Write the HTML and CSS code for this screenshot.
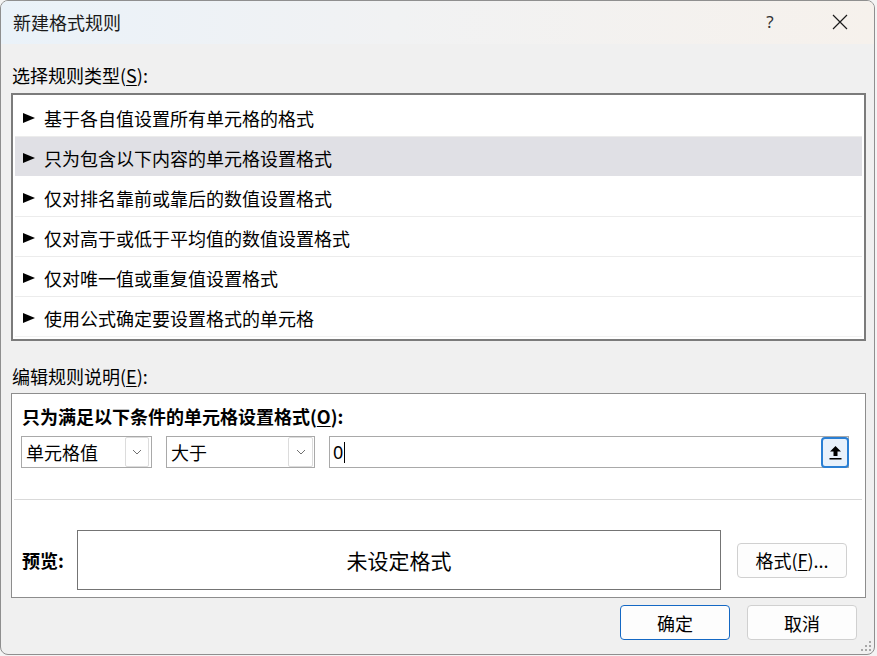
FILE: index.html
```html
<!DOCTYPE html>
<html lang="zh-CN">
<head>
<meta charset="utf-8">
<title>新建格式规则</title>
<link rel="stylesheet" href="styles.css">
</head>
<body>
<div class="window">
  <div class="titlebar">
    <span class="title">新建格式规则</span>
    <span class="help">?</span>
    <span class="close">
      <svg width="16" height="16" viewBox="0 0 16 16"><path d="M1 1 L15 15 M15 1 L1 15" stroke="#1a1a1a" stroke-width="1.2" fill="none"/></svg>
    </span>
  </div>
  <div class="content">
    <div class="label label-type">选择规则类型(<u>S</u>):</div>
    <div class="listbox">
      <div class="item"><i class="tri"></i>基于各自值设置所有单元格的格式</div>
      <div class="item selected"><i class="tri"></i>只为包含以下内容的单元格设置格式</div>
      <div class="item"><i class="tri"></i>仅对排名靠前或靠后的数值设置格式</div>
      <div class="item"><i class="tri"></i>仅对高于或低于平均值的数值设置格式</div>
      <div class="item"><i class="tri"></i>仅对唯一值或重复值设置格式</div>
      <div class="item"><i class="tri"></i>使用公式确定要设置格式的单元格</div>
    </div>
    <div class="label label-edit">编辑规则说明(<u>E</u>):</div>
    <div class="panel">
      <div class="heading">只为满足以下条件的单元格设置格式(<u>O</u>):</div>
      <div class="cond-row">
        <div class="combo combo-a">
          <span class="combo-text">单元格值</span>
          <span class="chev"><svg width="10" height="6" viewBox="0 0 10 6"><path d="M1 1 L5 5 L9 1" stroke="#707070" stroke-width="1" fill="none"/></svg></span>
        </div>
        <div class="combo combo-b">
          <span class="combo-text">大于</span>
          <span class="chev"><svg width="10" height="6" viewBox="0 0 10 6"><path d="M1 1 L5 5 L9 1" stroke="#707070" stroke-width="1" fill="none"/></svg></span>
        </div>
        <div class="input">
          <span class="val">0</span><span class="caret"></span>
          <span class="pick">
            <svg width="13" height="15" viewBox="0 0 13 15"><path d="M6.5 1 L12 6.5 L8.5 6.5 L8.5 11 L4.5 11 L4.5 6.5 L1 6.5 Z" fill="#000"/><rect x="0.5" y="13" width="12" height="1.5" fill="#000"/></svg>
          </span>
        </div>
      </div>
      <div class="sep"></div>
      <div class="preview-row">
        <span class="pv-label">预览:</span>
        <div class="pv-box">未设定格式</div>
        <button class="btn fmt">格式(<u>F</u>)...</button>
      </div>
    </div>
    <div class="actions">
      <button class="btn ok">确定</button>
      <button class="btn">取消</button>
    </div>
  </div>
  <svg class="grip" width="12" height="12" viewBox="0 0 12 12">
    <rect x="9" y="1" width="2" height="2" fill="#a8a8a8"/>
    <rect x="5" y="5" width="2" height="2" fill="#a8a8a8"/>
    <rect x="9" y="5" width="2" height="2" fill="#a8a8a8"/>
    <rect x="1" y="9" width="2" height="2" fill="#a8a8a8"/>
    <rect x="5" y="9" width="2" height="2" fill="#a8a8a8"/>
    <rect x="9" y="9" width="2" height="2" fill="#a8a8a8"/>
  </svg>
</div>
</body>
</html>
```
FILE: styles.css
```css
* { box-sizing: border-box; }

html, body {
  margin: 0;
  padding: 0;
}

body {
  background: #f4f4f4;
  font-family: "Noto Sans CJK SC", "Noto Sans", sans-serif;
  color: #000;
  width: 877px;
  height: 656px;
  overflow: hidden;
}

.window {
  width: 875px;
  height: 655px;
  border: 1px solid #8f8f8f;
  border-radius: 8px;
  overflow: hidden;
  background: #f0f0f0;
  position: relative;
  display: flex;
  flex-direction: column;
}

.titlebar {
  height: 43px;
  flex: none;
  display: flex;
  align-items: center;
  padding: 0 11px 2px 12px;
  background: linear-gradient(90deg, #eaf2f9 0%, #f1f2f3 45%, #f6f1ec 100%);
}

.title {
  flex: 1;
  font-size: 18px;
  line-height: 24px;
  color: #1a1a1a;
}

.help {
  width: 46px;
  text-align: center;
  font-family: "Noto Sans", sans-serif;
  font-size: 17px;
  line-height: 24px;
  color: #333;
}

.close {
  width: 46px;
  margin-left: 24px;
  display: flex;
  justify-content: center;
  align-items: center;
}

.content {
  padding: 0 17px 0 10px;
  display: flex;
  flex-direction: column;
}

.label {
  font-size: 18px;
  line-height: 24px;
  color: #000;
  padding-left: 1px;
}

.label-type { margin-top: 19px; }
.label-edit { margin-top: 23px; }

u { text-decoration-thickness: 1px; text-underline-offset: 2px; }

.listbox {
  margin-top: 6px;
  width: 855px;
  height: 248px;
  border: 2px solid #7b7b7b;
  padding: 2px;
  background: #fff;
}

.item {
  height: 40px;
  border-bottom: 1px solid #ececec;
  display: flex;
  align-items: center;
  padding-top: 3px;
  font-size: 18px;
  line-height: 24px;
  color: #000;
}

.item:last-child { border-bottom-color: #f2f2f2; }

.item.selected { background: #e0e0e5; border-bottom-color: #fff; }

.tri {
  width: 0;
  height: 0;
  margin-left: 8px;
  margin-right: 9px;
  border-left: 12px solid #000;
  border-top: 5.5px solid transparent;
  border-bottom: 5.5px solid transparent;
}

.panel {
  margin-top: 5px;
  width: 855px;
  height: 205px;
  border: 1px solid #8d8d8d;
  background: #fff;
  padding: 10px 9px 7px 9px;
  display: flex;
  flex-direction: column;
}

.heading {
  font-size: 18px;
  line-height: 24px;
  font-weight: bold;
  padding-left: 1px;
}

.cond-row {
  margin-top: 8px;
  height: 32px;
  display: flex;
  gap: 14px;
}

.combo {
  height: 32px;
  border: 1px solid #a9a9a9;
  background: #fff;
  display: flex;
  align-items: center;
  padding-left: 4px;
}

.combo-a { width: 131px; }
.combo-b { width: 149px; }

.combo-text {
  flex: 1;
  font-size: 18px;
  line-height: 24px;
}

.chev {
  width: 24px;
  height: 30px;
  border: 1px solid #dcdcdc;
  border-radius: 2px;
  margin-right: 2px;
  display: flex;
  align-items: center;
  justify-content: center;
}

.combo-b .chev { width: 25px; margin-right: 1px; }

.input {
  width: 520px;
  height: 32px;
  border: 1px solid #a9a9a9;
  display: flex;
  align-items: center;
  padding-left: 3px;
}

.val {
  font-family: "Noto Sans", sans-serif;
  font-size: 18px;
  line-height: 24px;
}

.caret {
  width: 1px;
  height: 21px;
  background: #000;
  margin-left: 1px;
}

.pick {
  margin-left: auto;
  margin-right: -1px;
  width: 28px;
  height: 31px;
  border: 2px solid #2a7fd4;
  border-radius: 4px;
  background: #e8f1fb;
  display: flex;
  align-items: center;
  justify-content: center;
}

.sep {
  margin: 31px -6px 0 -7px;
  height: 1px;
  background: #d9d9d9;
}

.preview-row {
  margin-top: 30px;
  height: 60px;
  display: flex;
  align-items: center;
}

.pv-label {
  width: 56px;
  padding-left: 1px;
  font-size: 18px;
  line-height: 24px;
  font-weight: bold;
}

.pv-box {
  width: 644px;
  height: 60px;
  border: 1px solid #747474;
  display: flex;
  align-items: center;
  justify-content: center;
  font-size: 21px;
  line-height: 28px;
  color: #000;
}

.btn {
  width: 110px;
  height: 35px;
  border: 1px solid #d0d0d0;
  border-radius: 4px;
  background: #fdfdfd;
  font-family: "Noto Sans CJK SC", "Noto Sans", sans-serif;
  font-size: 18px;
  line-height: 24px;
  color: #000;
  padding: 0;
}

.fmt { margin-left: 16px; }

.actions {
  margin-top: 7px;
  display: flex;
  justify-content: flex-end;
  gap: 17px;
}

.ok { border-color: #1468c4; }

.grip {
  position: absolute;
  right: 2px;
  bottom: 2px;
}
```
